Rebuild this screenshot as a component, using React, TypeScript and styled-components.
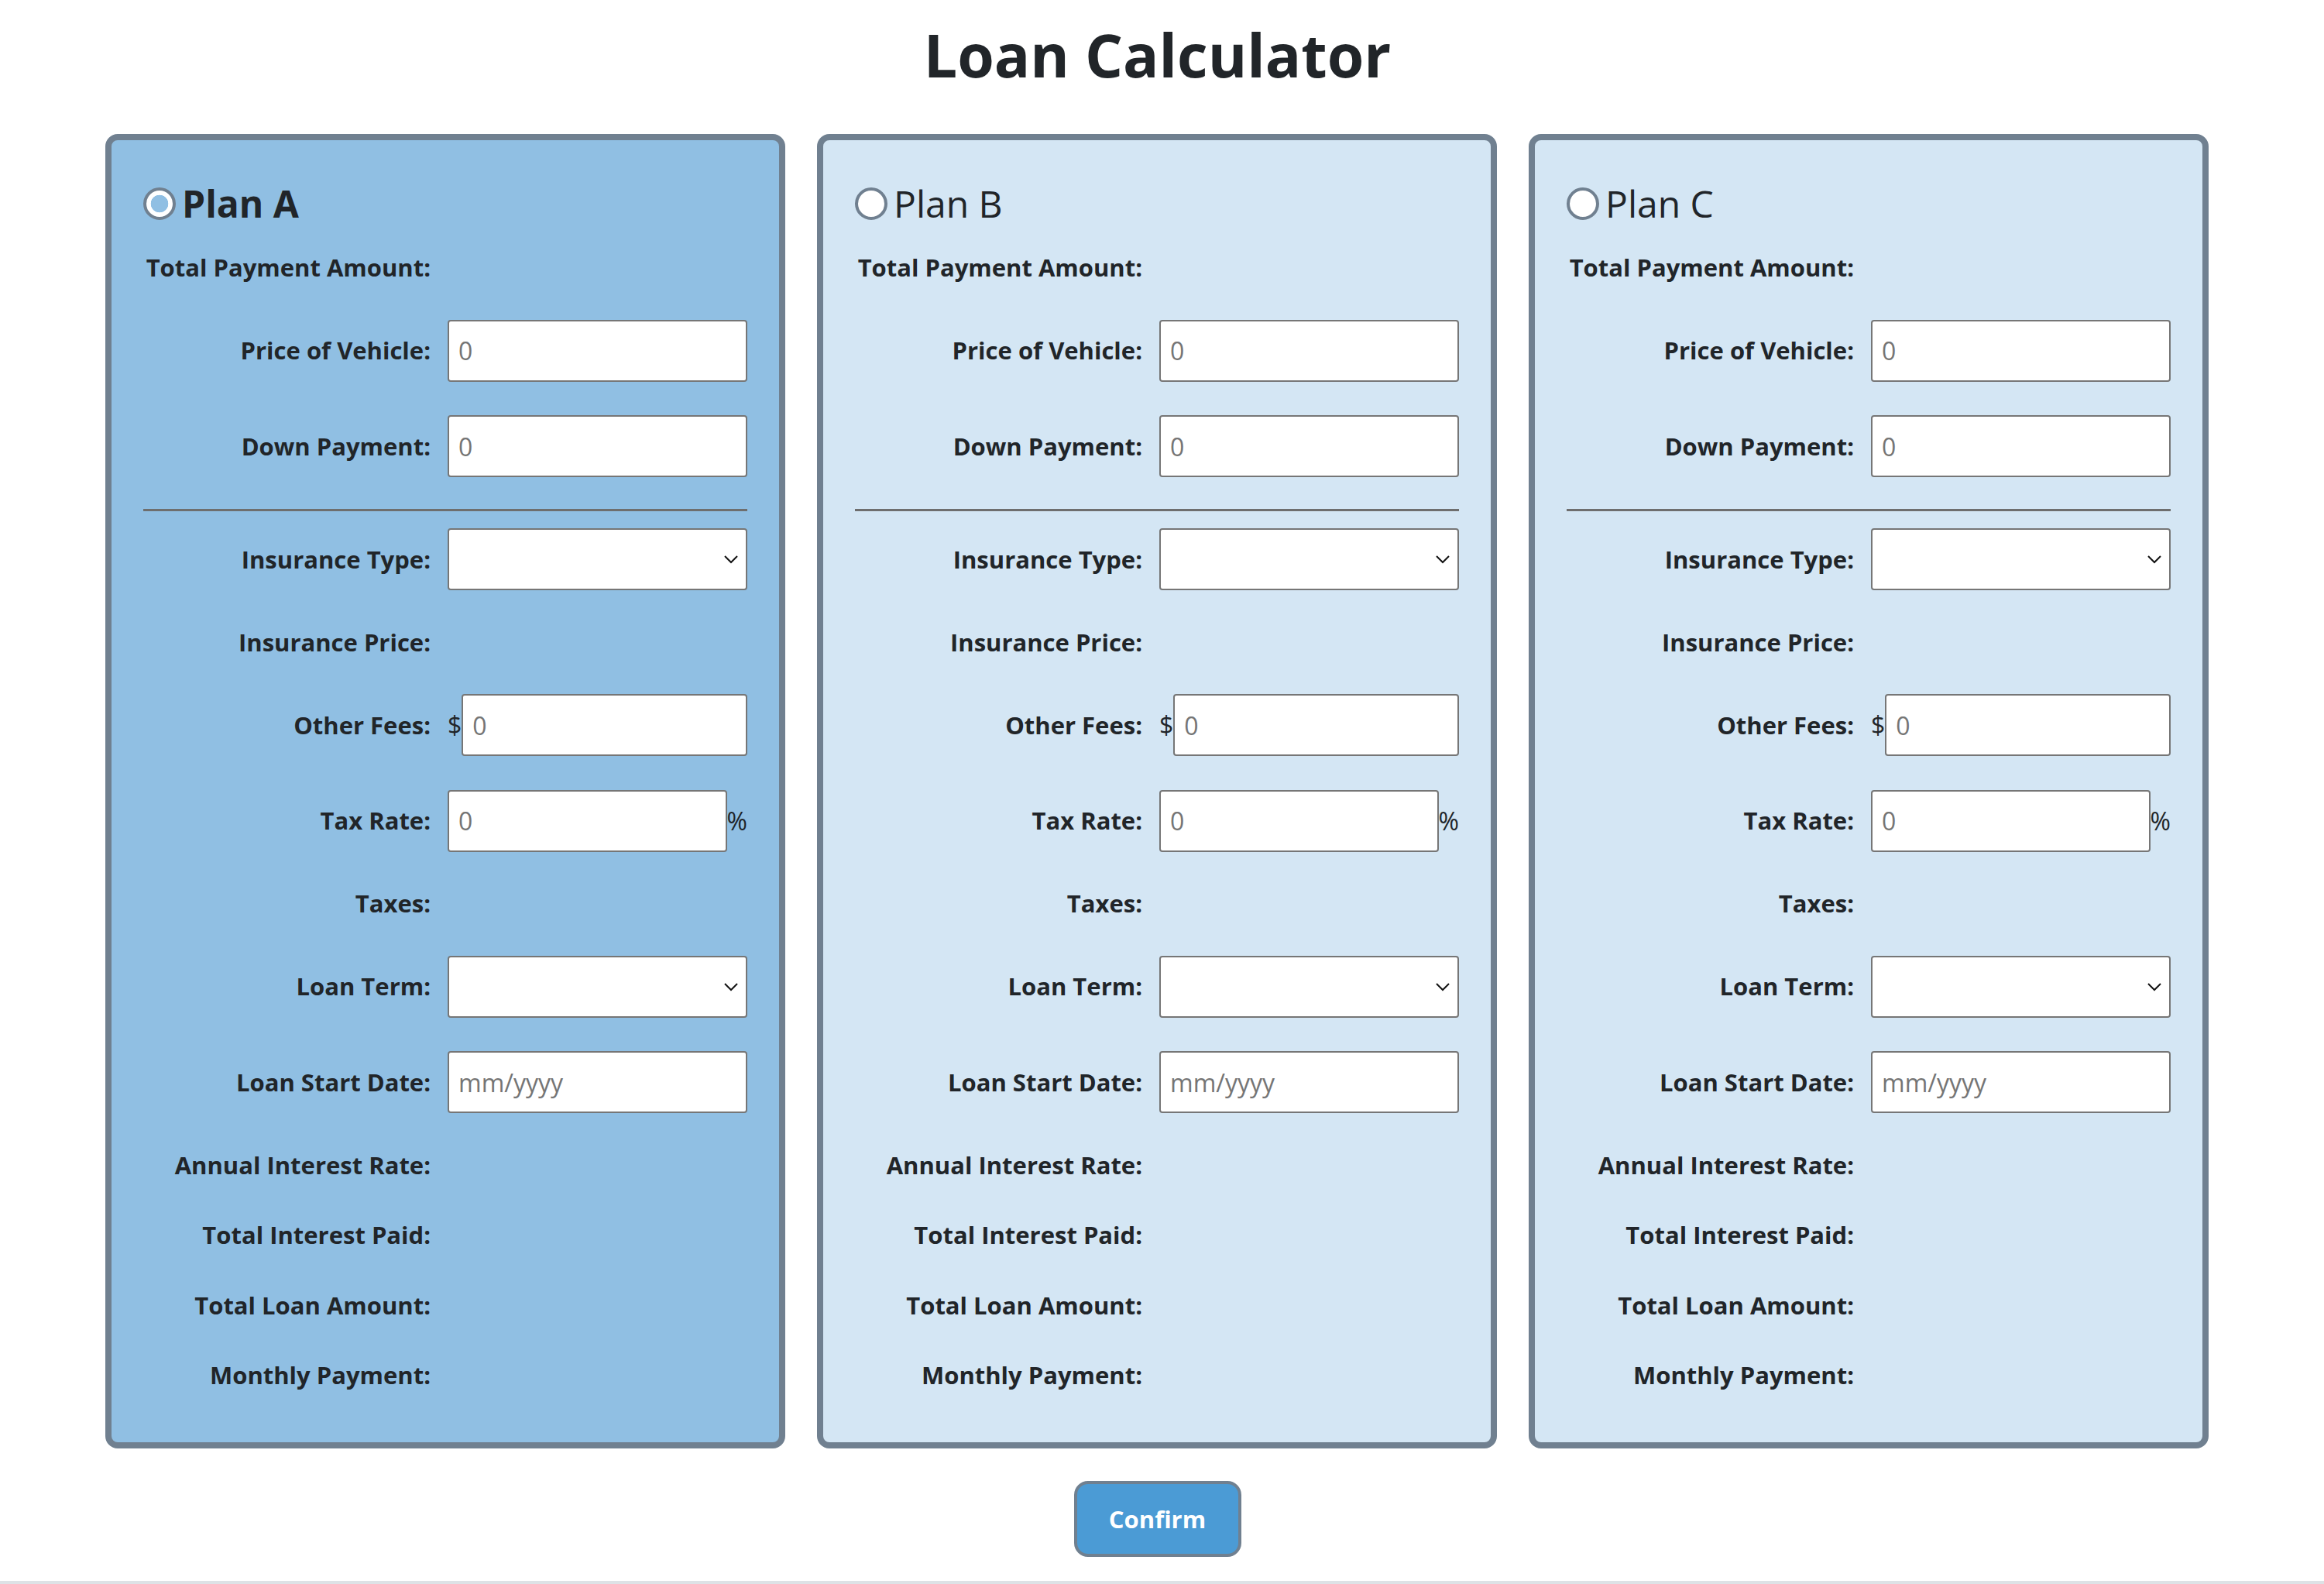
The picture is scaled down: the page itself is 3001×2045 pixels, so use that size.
import React from "react";
import styled, { createGlobalStyle } from "styled-components";

const GlobalStyle = createGlobalStyle`
  html, body { margin: 0; padding: 0; background: #ffffff; }
  body {
    font-family: "Open Sans", "Noto Sans", sans-serif;
    color: #212529;
  }
  *, *::before, *::after { box-sizing: border-box; }
`;

const Page = styled.main`
  width: 2717px;
  margin-left: 136px;
  display: flex;
  flex-direction: column;
  align-items: center;
`;

const Title = styled.h1`
  margin: 0;
  padding-top: 23px;
  font-size: 77px;
  line-height: 96px;
  font-weight: 700;
  text-align: center;
`;

const Plans = styled.div`
  margin-top: 54px;
  width: 100%;
  display: grid;
  grid-template-columns: repeat(3, 878px);
  column-gap: 41px;
`;

const Card = styled.section<{ $active: boolean }>`
  border: 8px solid #708090;
  border-radius: 16px;
  background: ${(p) => (p.$active ? "#90bfe3" : "#d4e6f4")};
  padding: 52px 41px 63px;
  display: flex;
  flex-direction: column;
`;

const PlanHeader = styled.label`
  display: flex;
  align-items: center;
  gap: 8px;
  height: 60px;
  margin-bottom: 29px;
`;

const Radio = styled.input`
  appearance: none;
  -webkit-appearance: none;
  margin: 0;
  width: 42px;
  height: 42px;
  border-radius: 50%;
  border: 4px solid #708090;
  background: #ffffff;
  flex: none;
  &:checked {
    background: radial-gradient(circle, #90bfe3 0 11px, #ffffff 11.6px);
  }
`;

const PlanName = styled.span<{ $active: boolean }>`
  font-size: 48px;
  line-height: 60px;
  font-weight: ${(p) => (p.$active ? 700 : 400)};
`;

const Section = styled.div`
  display: flex;
  flex-direction: column;
  gap: 43.5px;
`;

const Row = styled.div<{ $field?: boolean }>`
  display: grid;
  grid-template-columns: 371px minmax(0, 1fr);
  column-gap: 22px;
  align-items: center;
  height: ${(p) => (p.$field ? "80px" : "47px")};
`;

const Label = styled.span`
  text-align: right;
  white-space: nowrap;
  font-size: 31px;
  line-height: 47px;
  font-weight: 700;
`;

const Field = styled.div`
  display: flex;
  align-items: center;
  height: 80px;
  min-width: 0;
  position: relative;
`;

const Affix = styled.span`
  flex: none;
  font-size: 32px;
  line-height: 1;
  color: #212529;
`;

const TextInput = styled.input`
  flex: 1 1 0;
  width: 0;
  min-width: 0;
  height: 80px;
  margin: 0;
  border: 2px solid #767676;
  border-radius: 4px;
  background: #ffffff;
  padding: 0 12px;
  font-family: inherit;
  font-size: 32px;
  color: #212529;
  &::placeholder {
    color: #757575;
  }
`;

const Select = styled.select`
  appearance: none;
  -webkit-appearance: none;
  flex: 1 1 0;
  width: 0;
  min-width: 0;
  height: 80px;
  margin: 0;
  border: 2px solid #767676;
  border-radius: 4px;
  background: #ffffff;
  padding: 0 44px 0 12px;
  font-family: inherit;
  font-size: 31px;
  color: #212529;
`;

const Chevron = styled.svg`
  position: absolute;
  right: 11px;
  top: 50%;
  transform: translateY(-50%);
  pointer-events: none;
`;

const Divider = styled.hr`
  border: 0;
  height: 3px;
  width: 100%;
  margin: 41px 0 22px;
  background: #6e6e6e;
`;

const ConfirmButton = styled.button`
  margin-top: 42px;
  width: 216px;
  height: 98px;
  border: 4px solid #708090;
  border-radius: 18px;
  background: #4b9bd5;
  color: #ffffff;
  font-family: inherit;
  font-size: 31px;
  font-weight: 700;
  cursor: pointer;
`;

const FooterRule = styled.div`
  margin-top: 31px;
  border-top: 4px solid #dee2e6;
`;

const ChevronIcon = () => (
  <Chevron width="20" height="12" viewBox="0 0 20 12" aria-hidden="true">
    <polyline points="2,2 10,10 18,2" fill="none" stroke="#111" strokeWidth="2" />
  </Chevron>
);

const TextRow = ({ label }: { label: string }) => (
  <Row>
    <Label>{label}</Label>
  </Row>
);

const InputRow = ({
  label,
  placeholder,
  prefix,
  suffix,
}: {
  label: string;
  placeholder: string;
  prefix?: string;
  suffix?: string;
}) => (
  <Row $field>
    <Label>{label}</Label>
    <Field>
      {prefix && <Affix>{prefix}</Affix>}
      <TextInput type="text" placeholder={placeholder} />
      {suffix && <Affix>{suffix}</Affix>}
    </Field>
  </Row>
);

const SelectRow = ({ label }: { label: string }) => (
  <Row $field>
    <Label>{label}</Label>
    <Field>
      <Select defaultValue="">
        <option value=""></option>
      </Select>
      <ChevronIcon />
    </Field>
  </Row>
);

const PlanCard = ({ name, active }: { name: string; active: boolean }) => (
  <Card $active={active}>
    <PlanHeader>
      <Radio type="radio" name="plan" defaultChecked={active} />
      <PlanName $active={active}>{name}</PlanName>
    </PlanHeader>
    <Section>
      <TextRow label="Total Payment Amount:" />
      <InputRow label="Price of Vehicle:" placeholder="0" />
      <InputRow label="Down Payment:" placeholder="0" />
    </Section>
    <Divider />
    <Section>
      <SelectRow label="Insurance Type:" />
      <TextRow label="Insurance Price:" />
      <InputRow label="Other Fees:" placeholder="0" prefix="$" />
      <InputRow label="Tax Rate:" placeholder="0" suffix="%" />
      <TextRow label="Taxes:" />
      <SelectRow label="Loan Term:" />
      <InputRow label="Loan Start Date:" placeholder="mm/yyyy" />
      <TextRow label="Annual Interest Rate:" />
      <TextRow label="Total Interest Paid:" />
      <TextRow label="Total Loan Amount:" />
      <TextRow label="Monthly Payment:" />
    </Section>
  </Card>
);

export default function App() {
  return (
    <>
      <GlobalStyle />
      <Page>
        <Title>Loan Calculator</Title>
        <Plans>
          <PlanCard name="Plan A" active />
          <PlanCard name="Plan B" active={false} />
          <PlanCard name="Plan C" active={false} />
        </Plans>
        <ConfirmButton type="button">Confirm</ConfirmButton>
      </Page>
      <FooterRule />
    </>
  );
}
